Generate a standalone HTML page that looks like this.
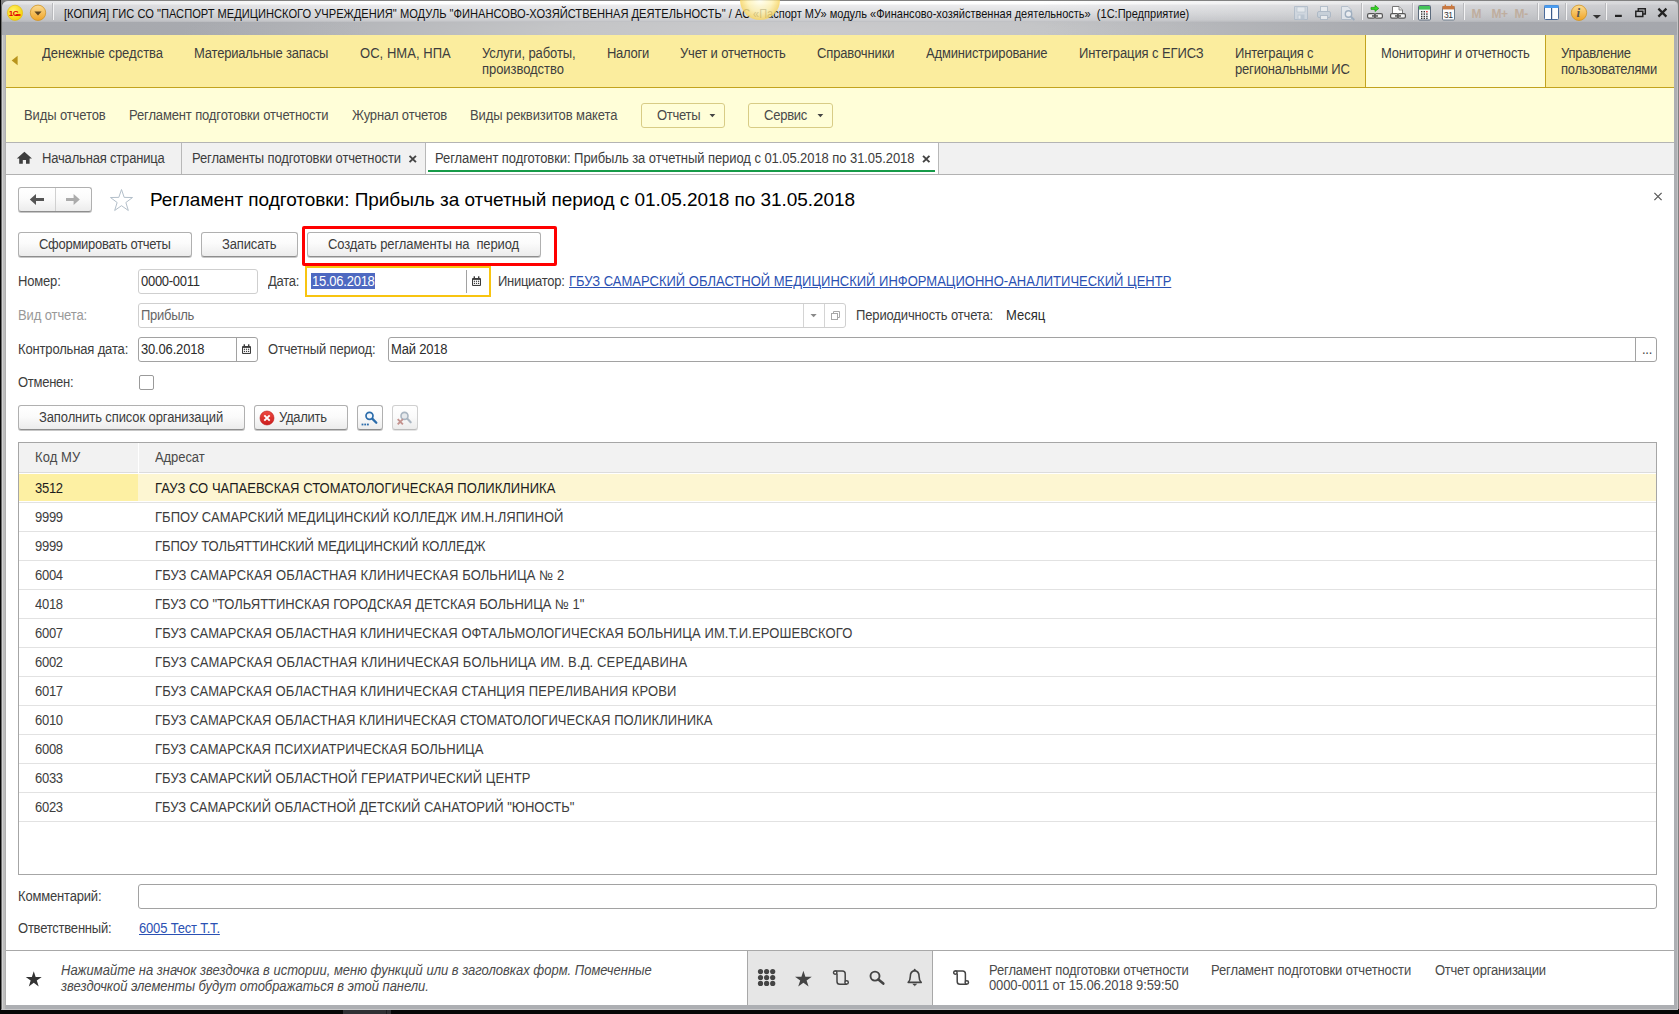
<!DOCTYPE html>
<html lang="ru">
<head>
<meta charset="utf-8">
<title>Регламент подготовки</title>
<style>
*{box-sizing:border-box;margin:0;padding:0}
html,body{width:1679px;height:1014px;overflow:hidden;background:#fff}
body{font-family:"Liberation Sans",sans-serif;font-size:13px;color:#3d3d3d;position:relative}
.a,.t{position:absolute;white-space:pre}
.t{line-height:16px;font-size:13px}

/* window frame */
#bgblack{left:0;top:0;width:1679px;height:1014px;background:linear-gradient(90deg,#060606 0,#060606 1px,rgba(0,0,0,0) 1px),linear-gradient(180deg,#808080 0,#808080 1009px,#060606 1009px)}
#win{left:1px;top:0;width:1677px;height:1010px;background:#adafb3;border-radius:7px 5px 0 0;border:1px solid #828282;border-bottom:1px solid #c8c8ca;border-left:1px solid #6e6e6e;border-right:1px solid #c4c4c6}
#frL{left:2px;top:35px;width:4px;height:974px;background:linear-gradient(90deg,#d2d2d2 0,#d2d2d2 1px,#bebebe 1px,#bcbcbc 3px,#b0b0b0 3px,#b0b0b0 4px)}
#topl{left:8px;top:0;width:1664px;height:1px;background:#828282}
#titlebar{left:2px;top:1px;width:1675px;height:34px;border-radius:6px 4px 0 0;overflow:hidden;background:linear-gradient(90deg,rgba(160,162,168,.3) 0,rgba(160,162,168,0) 22%,rgba(160,162,168,0) 62%,rgba(160,162,168,.45) 100%),linear-gradient(180deg,#ffffff 0,#ffffff 2.5px,#ebebed 4.5px,#dddee0 12px,#cdced1 19px,#bdbec2 21px,rgba(169,171,176,0) 21.5px),radial-gradient(ellipse 620px 40px at 800px 30px,#cbcbcd 0,#c4c5c7 40%,#a9abb0 100%)}
.ttl{top:5.6px;font-size:13px;color:#111;transform-origin:0 0}
.tsep{top:3px;width:2px;height:17px;background:linear-gradient(90deg,#b9babd 0,#b9babd 1px,#f4f4f5 1px)}
/* sections */
#sections{left:6px;top:35px;width:1668px;height:53px;background:#fbed9e;border-bottom:1px solid #c2a31e}
#secActive{left:1365px;top:35px;width:181px;height:52px;background:#fffed8;border-left:1px solid #c2a31e;border-right:1px solid #c2a31e}
.sec{color:#3d3d3d}
#cmds{left:6px;top:88px;width:1668px;height:55px;background:#fffed8;border-bottom:1px solid #b4b4b4}
.cmd{color:#4a4a4a}
.cbtn{top:103px;height:25px;border:1px solid #d8cc86;border-radius:3px;background:#fffed8}
#tabs{left:6px;top:143px;width:1668px;height:32px;background:#f1f1f1;border-bottom:1px solid #b2b2b2}
#tabA{left:425px;top:143px;width:514px;height:31px;background:#fff;border-left:1px solid #b8b8b8;border-right:1px solid #b8b8b8}
#tabU{left:428px;top:170px;width:507px;height:2px;background:#169a48}
.vsep{width:1px;background:#b8b8b8}
.tab{color:#3d3d3d}
/* buttons */
.btn{height:25px;border:1px solid #b0b0b0;border-bottom-color:#8e8e8e;border-radius:3px;background:linear-gradient(180deg,#ffffff 0,#fbfbfb 45%,#ececec 100%);box-shadow:0 1px 0 rgba(0,0,0,.22)}
.btn.dis{border-color:#d0d0d0;border-bottom-color:#bcbcbc;box-shadow:0 1px 0 rgba(0,0,0,.1)}
.inp{height:25px;border:1px solid #a2a2a2;border-radius:3px;background:#fff}
.inp.lt{border-color:#cfcfcf}
.lbl{color:#3d3d3d}
.gray{color:#999}
.isep{width:1px;background:#a2a2a2}
/* table */
#tbl{left:18px;top:442px;width:1639px;height:433px;border:1px solid #a6a6a6;background:#fff}
#thead{left:19px;top:443px;width:1637px;height:30px;background:#f2f2f2;border-bottom:1px solid #dcdcdc}
.hl{left:19px;width:1637px;height:1px;background:#e2e2e2}
.row{color:#3d3d3d}
#bottom{left:6px;top:950px;width:1668px;height:55px;background:#fff;border-top:1px solid #a8a8a8}
#bmid{left:747px;top:951px;width:186px;height:54px;background:#e6e6e6;border-left:1px solid #a8a8a8;border-right:1px solid #a8a8a8}
.it{font-style:italic;color:#4a4a4a}
</style>
</head>
<body>
<div class="a" id="bgblack"></div>
<div class="a" id="win"></div>
<div class="a" id="titlebar"></div>
<div class="a tsep" style="left:52px"></div>
<div class="a tsep" style="left:1361px"></div>
<div class="a tsep" style="left:1412px"></div>
<div class="a tsep" style="left:1463px"></div>
<div class="a tsep" style="left:1537px"></div>
<div class="a tsep" style="left:1565px"></div>
<div class="a tsep" style="left:1605px"></div>
<div class="a" id="sections"></div><div class="a" id="secActive"></div>
<div class="a" id="frL"></div>
<div class="a" id="cmds"></div>
<div class="a cbtn" style="left:641px;top:103px;width:84px;height:25px;"></div>
<div class="a cbtn" style="left:748px;top:103px;width:85px;height:25px;"></div>
<div class="a" id="tabs"></div><div class="a" id="tabA"></div><div class="a" id="tabU"></div>
<div class="a vsep" style="left:181px;top:143px;width:1px;height:31px;"></div>
<div class="a " style="left:6px;top:175px;width:1668px;height:775px;background:#fff"></div>
<div class="a btn" style="left:18px;top:187px;width:74px;height:25px;"></div>
<div class="a " style="left:55px;top:188px;width:1px;height:23px;background:#d0d0d0"></div>
<div class="a btn" style="left:18px;top:232px;width:174px;height:25px;"></div>
<div class="a btn" style="left:201px;top:232px;width:97px;height:25px;"></div>
<div class="a btn" style="left:307px;top:232px;width:234px;height:25px;"></div>
<div class="a " style="left:302px;top:226px;width:255px;height:40px;border:3px solid #ff0000;border-radius:2px"></div>
<div class="a inp lt" style="left:138px;top:269px;width:120px;height:25px;"></div>
<div class="a " style="left:305px;top:266px;width:186px;height:31px;border:2px solid #f8c410;background:#fff"></div>
<div class="a " style="left:311px;top:273px;width:64px;height:16px;background:#4e69c1"></div>
<div class="a isep" style="left:466px;top:270px;width:1px;height:23px;"></div>
<div class="a inp lt" style="left:138px;top:303px;width:708px;height:25px;"></div>
<div class="a " style="left:803px;top:304px;width:1px;height:23px;background:#d4d4d4"></div>
<div class="a " style="left:824px;top:304px;width:1px;height:23px;background:#d4d4d4"></div>
<div class="a inp" style="left:138px;top:337px;width:120px;height:25px;"></div>
<div class="a isep" style="left:236px;top:338px;width:1px;height:23px;"></div>
<div class="a inp" style="left:388px;top:337px;width:1269px;height:25px;"></div>
<div class="a isep" style="left:1635px;top:338px;width:1px;height:23px;"></div>
<div class="a " style="left:139px;top:375px;width:15px;height:15px;border:1px solid #9a9a9a;border-radius:2px;background:#fff"></div>
<div class="a btn" style="left:18px;top:405px;width:227px;height:25px;"></div>
<div class="a btn" style="left:254px;top:405px;width:94px;height:25px;"></div>
<div class="a btn" style="left:357px;top:405px;width:26px;height:25px;"></div>
<div class="a btn dis" style="left:392px;top:405px;width:26px;height:25px;"></div>
<div class="a" id="tbl"></div><div class="a" id="thead"></div>
<div class="a " style="left:138px;top:443px;width:1px;height:30px;background:#fff"></div>
<div class="a " style="left:19px;top:474px;width:119px;height:27px;background:#fdf0a3"></div>
<div class="a " style="left:138px;top:474px;width:1518px;height:27px;background:#fdf6d2"></div>
<div class="a hl" style="left:19px;top:502px;width:1637px;height:1px;"></div>
<div class="a hl" style="left:19px;top:531px;width:1637px;height:1px;"></div>
<div class="a hl" style="left:19px;top:560px;width:1637px;height:1px;"></div>
<div class="a hl" style="left:19px;top:589px;width:1637px;height:1px;"></div>
<div class="a hl" style="left:19px;top:618px;width:1637px;height:1px;"></div>
<div class="a hl" style="left:19px;top:647px;width:1637px;height:1px;"></div>
<div class="a hl" style="left:19px;top:676px;width:1637px;height:1px;"></div>
<div class="a hl" style="left:19px;top:705px;width:1637px;height:1px;"></div>
<div class="a hl" style="left:19px;top:734px;width:1637px;height:1px;"></div>
<div class="a hl" style="left:19px;top:763px;width:1637px;height:1px;"></div>
<div class="a hl" style="left:19px;top:792px;width:1637px;height:1px;"></div>
<div class="a hl" style="left:19px;top:821px;width:1637px;height:1px;"></div>
<div class="a inp" style="left:138px;top:884px;width:1519px;height:25px;"></div>
<div class="a" id="bottom"></div><div class="a" id="bmid"></div>
<div class="a " style="left:343px;top:1010px;width:48px;height:4px;background:#303034"></div>
<div class="a " style="left:386px;top:1010px;width:1px;height:4px;background:#1c1c1e"></div>
<div class="t ttl" id="titleA" style="left:63.5px;transform:scaleX(0.8557)">[КОПИЯ] ГИС СО "ПАСПОРТ МЕДИЦИНСКОГО УЧРЕЖДЕНИЯ" МОДУЛЬ "ФИНАНСОВО-ХОЗЯЙСТВЕННАЯ ДЕЯТЕЛЬНОСТЬ" / АС</div><div class="t ttl" id="titleB" style="left:753.0px;transform:scaleX(0.8479)">«Паспорт МУ» модуль «Финансово-хозяйственная деятельность»  (1С:Предприятие)</div>
<div class="t sec" style="left:42.00px;top:45px;font-size:14px;transform:scaleX(0.9286);transform-origin:0 0;letter-spacing:0.002px;">Денежные средства</div>
<div class="t sec" style="left:194.25px;top:45px;font-size:14px;transform:scaleX(0.9286);transform-origin:0 0;letter-spacing:-0.205px;">Материальные запасы</div>
<div class="t sec" style="left:360.00px;top:45px;font-size:14px;transform:scaleX(0.9286);transform-origin:0 0;letter-spacing:0.054px;">ОС, НМА, НПА</div>
<div class="t sec" style="left:482.00px;top:45px;font-size:14px;transform:scaleX(0.9286);transform-origin:0 0;letter-spacing:-0.098px;">Услуги, работы,</div>
<div class="t sec" style="left:482.00px;top:61px;font-size:14px;transform:scaleX(0.9286);transform-origin:0 0;letter-spacing:-0.056px;">производство</div>
<div class="t sec" style="left:607.00px;top:45px;font-size:14px;transform:scaleX(0.9286);transform-origin:0 0;letter-spacing:-0.302px;">Налоги</div>
<div class="t sec" style="left:680.00px;top:45px;font-size:14px;transform:scaleX(0.9286);transform-origin:0 0;letter-spacing:-0.174px;">Учет и отчетность</div>
<div class="t sec" style="left:817.00px;top:45px;font-size:14px;transform:scaleX(0.9286);transform-origin:0 0;letter-spacing:-0.139px;">Справочники</div>
<div class="t sec" style="left:926.25px;top:45px;font-size:14px;transform:scaleX(0.9286);transform-origin:0 0;letter-spacing:-0.166px;">Администрирование</div>
<div class="t sec" style="left:1079.25px;top:45px;font-size:14px;transform:scaleX(0.9286);transform-origin:0 0;letter-spacing:-0.107px;">Интеграция с ЕГИСЗ</div>
<div class="t sec" style="left:1235.00px;top:45px;font-size:14px;transform:scaleX(0.9286);transform-origin:0 0;letter-spacing:-0.204px;">Интеграция с</div>
<div class="t sec" style="left:1235.00px;top:61px;font-size:14px;transform:scaleX(0.9286);transform-origin:0 0;letter-spacing:-0.198px;">региональными ИС</div>
<div class="t sec" style="left:1381.00px;top:45px;font-size:14px;transform:scaleX(0.9286);transform-origin:0 0;letter-spacing:-0.190px;">Мониторинг и отчетность</div>
<div class="t sec" style="left:1561.00px;top:45px;font-size:14px;transform:scaleX(0.9286);transform-origin:0 0;letter-spacing:-0.261px;">Управление</div>
<div class="t sec" style="left:1561.00px;top:61px;font-size:14px;transform:scaleX(0.9286);transform-origin:0 0;letter-spacing:-0.187px;">пользователями</div>
<div class="t cmd" style="left:24.25px;top:107px;font-size:14px;transform:scaleX(0.9286);transform-origin:0 0;letter-spacing:-0.116px;">Виды отчетов</div>
<div class="t cmd" style="left:129.00px;top:107px;font-size:14px;transform:scaleX(0.9286);transform-origin:0 0;letter-spacing:-0.146px;">Регламент подготовки отчетности</div>
<div class="t cmd" style="left:351.50px;top:107px;font-size:14px;transform:scaleX(0.9286);transform-origin:0 0;letter-spacing:-0.183px;">Журнал отчетов</div>
<div class="t cmd" style="left:470.25px;top:107px;font-size:14px;transform:scaleX(0.9286);transform-origin:0 0;letter-spacing:-0.101px;">Виды реквизитов макета</div>
<div class="t cmd" style="left:657.00px;top:107px;font-size:14px;transform:scaleX(0.9286);transform-origin:0 0;letter-spacing:-0.302px;">Отчеты</div>
<div class="t cmd" style="left:764.00px;top:107px;font-size:14px;transform:scaleX(0.9286);transform-origin:0 0;letter-spacing:-0.257px;">Сервис</div>
<div class="t tab" style="left:42.00px;top:150px;font-size:14px;transform:scaleX(0.9286);transform-origin:0 0;letter-spacing:-0.191px;">Начальная страница</div>
<div class="t tab" style="left:191.75px;top:150px;font-size:14px;transform:scaleX(0.9286);transform-origin:0 0;letter-spacing:-0.136px;">Регламенты подготовки отчетности</div>
<div class="t tab" style="left:435.00px;top:150px;font-size:14px;transform:scaleX(0.9286);transform-origin:0 0;letter-spacing:-0.073px;">Регламент подготовки: Прибыль за отчетный период с 01.05.2018 по 31.05.2018</div>
<div class="t ftitle" style="left:150.00px;top:188px;font-size:19px;line-height:24px;letter-spacing:-0.039px;color:#000">Регламент подготовки: Прибыль за отчетный период с 01.05.2018 по 31.05.2018</div>
<div class="t btxt" style="left:39.25px;top:236px;font-size:14px;transform:scaleX(0.9286);transform-origin:0 0;letter-spacing:-0.308px;color:#3d3d3d">Сформировать отчеты</div>
<div class="t btxt" style="left:222.00px;top:236px;font-size:14px;transform:scaleX(0.9286);transform-origin:0 0;letter-spacing:-0.162px;color:#3d3d3d">Записать</div>
<div class="t btxt" style="left:328.25px;top:236px;font-size:14px;transform:scaleX(0.9286);transform-origin:0 0;letter-spacing:-0.106px;color:#3d3d3d">Создать регламенты на  период</div>
<div class="t lbl" style="left:18.00px;top:273px;font-size:14px;transform:scaleX(0.9286);transform-origin:0 0;letter-spacing:-0.185px;">Номер:</div>
<div class="t val" style="left:141.25px;top:273px;font-size:14px;transform:scaleX(0.9286);transform-origin:0 0;letter-spacing:-0.302px;color:#2c2c2c">0000-0011</div>
<div class="t lbl" style="left:268.00px;top:273px;font-size:14px;transform:scaleX(0.9286);transform-origin:0 0;letter-spacing:-0.280px;">Дата:</div>
<div class="t sel" style="left:311.75px;top:273px;font-size:14px;transform:scaleX(0.9286);transform-origin:0 0;letter-spacing:-0.266px;color:#fff">15.06.2018</div>
<div class="t lbl" style="left:498.25px;top:273px;font-size:14px;transform:scaleX(0.9286);transform-origin:0 0;letter-spacing:-0.302px;">Инициатор:</div>
<div class="t lnk" style="left:569.25px;top:273px;font-size:14px;transform:scaleX(0.9286);transform-origin:0 0;letter-spacing:0.004px;color:#2b51b3;text-decoration:underline">ГБУЗ САМАРСКИЙ ОБЛАСТНОЙ МЕДИЦИНСКИЙ ИНФОРМАЦИОННО-АНАЛИТИЧЕСКИЙ ЦЕНТР</div>
<div class="t gray" style="left:18.00px;top:307px;font-size:14px;transform:scaleX(0.9286);transform-origin:0 0;letter-spacing:-0.113px;">Вид отчета:</div>
<div class="t val" style="left:141.25px;top:307px;font-size:14px;transform:scaleX(0.9286);transform-origin:0 0;letter-spacing:-0.302px;color:#666">Прибыль</div>
<div class="t lbl" style="left:856.25px;top:307px;font-size:14px;transform:scaleX(0.9286);transform-origin:0 0;letter-spacing:-0.150px;">Периодичность отчета:</div>
<div class="t val" style="left:1005.75px;top:307px;font-size:14px;transform:scaleX(0.9286);transform-origin:0 0;letter-spacing:0.031px;color:#2c2c2c">Месяц</div>
<div class="t lbl" style="left:18.00px;top:341px;font-size:14px;transform:scaleX(0.9286);transform-origin:0 0;letter-spacing:-0.166px;">Контрольная дата:</div>
<div class="t val" style="left:141.25px;top:341px;font-size:14px;transform:scaleX(0.9286);transform-origin:0 0;letter-spacing:-0.186px;color:#2c2c2c">30.06.2018</div>
<div class="t lbl" style="left:268.25px;top:341px;font-size:14px;transform:scaleX(0.9286);transform-origin:0 0;letter-spacing:-0.171px;">Отчетный период:</div>
<div class="t val" style="left:391.25px;top:341px;font-size:14px;transform:scaleX(0.9286);transform-origin:0 0;letter-spacing:-0.223px;color:#2c2c2c">Май 2018</div>
<div class="t val" style="left:1641.50px;top:341px;font-size:14px;transform:scaleX(0.9286);transform-origin:0 0;letter-spacing:-0.302px;color:#444">...</div>
<div class="t lbl" style="left:18.00px;top:374px;font-size:14px;transform:scaleX(0.9286);transform-origin:0 0;letter-spacing:-0.282px;">Отменен:</div>
<div class="t btxt" style="left:39.25px;top:409px;font-size:14px;transform:scaleX(0.9286);transform-origin:0 0;letter-spacing:-0.118px;">Заполнить список организаций</div>
<div class="t btxt" style="left:279.25px;top:409px;font-size:14px;transform:scaleX(0.9286);transform-origin:0 0;letter-spacing:-0.302px;">Удалить</div>
<div class="t th" style="left:35.00px;top:449px;font-size:14px;transform:scaleX(0.9286);transform-origin:0 0;letter-spacing:0.108px;color:#4a4a4a">Код МУ</div>
<div class="t th" style="left:155.00px;top:449px;font-size:14px;transform:scaleX(0.9286);transform-origin:0 0;letter-spacing:-0.082px;color:#4a4a4a">Адресат</div>
<div class="t row" style="left:35.00px;top:480px;font-size:14px;transform:scaleX(0.9286);transform-origin:0 0;letter-spacing:-0.302px;color:#1c1c1c">3512</div>
<div class="t row" style="left:154.70px;top:480px;font-size:14px;transform:scaleX(0.9286);transform-origin:0 0;letter-spacing:0.051px;color:#1c1c1c">ГАУЗ СО ЧАПАЕВСКАЯ СТОМАТОЛОГИЧЕСКАЯ ПОЛИКЛИНИКА</div>
<div class="t row" style="left:35.00px;top:509px;font-size:14px;transform:scaleX(0.9286);transform-origin:0 0;letter-spacing:-0.302px;color:#3d3d3d">9999</div>
<div class="t row" style="left:154.70px;top:509px;font-size:14px;transform:scaleX(0.9286);transform-origin:0 0;letter-spacing:0.038px;color:#3d3d3d">ГБПОУ САМАРСКИЙ МЕДИЦИНСКИЙ КОЛЛЕДЖ ИМ.Н.ЛЯПИНОЙ</div>
<div class="t row" style="left:35.00px;top:538px;font-size:14px;transform:scaleX(0.9286);transform-origin:0 0;letter-spacing:-0.302px;color:#3d3d3d">9999</div>
<div class="t row" style="left:154.70px;top:538px;font-size:14px;transform:scaleX(0.9286);transform-origin:0 0;letter-spacing:-0.069px;color:#3d3d3d">ГБПОУ ТОЛЬЯТТИНСКИЙ МЕДИЦИНСКИЙ КОЛЛЕДЖ</div>
<div class="t row" style="left:35.00px;top:567px;font-size:14px;transform:scaleX(0.9286);transform-origin:0 0;letter-spacing:-0.302px;color:#3d3d3d">6004</div>
<div class="t row" style="left:154.70px;top:567px;font-size:14px;transform:scaleX(0.9286);transform-origin:0 0;letter-spacing:0.126px;color:#3d3d3d">ГБУЗ САМАРСКАЯ ОБЛАСТНАЯ КЛИНИЧЕСКАЯ БОЛЬНИЦА № 2</div>
<div class="t row" style="left:35.00px;top:596px;font-size:14px;transform:scaleX(0.9286);transform-origin:0 0;letter-spacing:-0.302px;color:#3d3d3d">4018</div>
<div class="t row" style="left:154.70px;top:596px;font-size:14px;transform:scaleX(0.9286);transform-origin:0 0;letter-spacing:-0.015px;color:#3d3d3d">ГБУЗ СО "ТОЛЬЯТТИНСКАЯ ГОРОДСКАЯ ДЕТСКАЯ БОЛЬНИЦА № 1"</div>
<div class="t row" style="left:35.00px;top:625px;font-size:14px;transform:scaleX(0.9286);transform-origin:0 0;letter-spacing:-0.302px;color:#3d3d3d">6007</div>
<div class="t row" style="left:154.70px;top:625px;font-size:14px;transform:scaleX(0.9286);transform-origin:0 0;letter-spacing:0.104px;color:#3d3d3d">ГБУЗ САМАРСКАЯ ОБЛАСТНАЯ КЛИНИЧЕСКАЯ ОФТАЛЬМОЛОГИЧЕСКАЯ БОЛЬНИЦА ИМ.Т.И.ЕРОШЕВСКОГО</div>
<div class="t row" style="left:35.00px;top:654px;font-size:14px;transform:scaleX(0.9286);transform-origin:0 0;letter-spacing:-0.302px;color:#3d3d3d">6002</div>
<div class="t row" style="left:154.70px;top:654px;font-size:14px;transform:scaleX(0.9286);transform-origin:0 0;letter-spacing:0.147px;color:#3d3d3d">ГБУЗ САМАРСКАЯ ОБЛАСТНАЯ КЛИНИЧЕСКАЯ БОЛЬНИЦА ИМ. В.Д. СЕРЕДАВИНА</div>
<div class="t row" style="left:35.00px;top:683px;font-size:14px;transform:scaleX(0.9286);transform-origin:0 0;letter-spacing:-0.302px;color:#3d3d3d">6017</div>
<div class="t row" style="left:154.70px;top:683px;font-size:14px;transform:scaleX(0.9286);transform-origin:0 0;letter-spacing:0.106px;color:#3d3d3d">ГБУЗ САМАРСКАЯ ОБЛАСТНАЯ КЛИНИЧЕСКАЯ СТАНЦИЯ ПЕРЕЛИВАНИЯ КРОВИ</div>
<div class="t row" style="left:35.00px;top:712px;font-size:14px;transform:scaleX(0.9286);transform-origin:0 0;letter-spacing:-0.302px;color:#3d3d3d">6010</div>
<div class="t row" style="left:154.70px;top:712px;font-size:14px;transform:scaleX(0.9286);transform-origin:0 0;letter-spacing:0.061px;color:#3d3d3d">ГБУЗ САМАРСКАЯ ОБЛАСТНАЯ КЛИНИЧЕСКАЯ СТОМАТОЛОГИЧЕСКАЯ ПОЛИКЛИНИКА</div>
<div class="t row" style="left:35.00px;top:741px;font-size:14px;transform:scaleX(0.9286);transform-origin:0 0;letter-spacing:-0.302px;color:#3d3d3d">6008</div>
<div class="t row" style="left:154.70px;top:741px;font-size:14px;transform:scaleX(0.9286);transform-origin:0 0;letter-spacing:0.032px;color:#3d3d3d">ГБУЗ САМАРСКАЯ ПСИХИАТРИЧЕСКАЯ БОЛЬНИЦА</div>
<div class="t row" style="left:35.00px;top:770px;font-size:14px;transform:scaleX(0.9286);transform-origin:0 0;letter-spacing:-0.302px;color:#3d3d3d">6033</div>
<div class="t row" style="left:154.70px;top:770px;font-size:14px;transform:scaleX(0.9286);transform-origin:0 0;letter-spacing:0.059px;color:#3d3d3d">ГБУЗ САМАРСКИЙ ОБЛАСТНОЙ ГЕРИАТРИЧЕСКИЙ ЦЕНТР</div>
<div class="t row" style="left:35.00px;top:799px;font-size:14px;transform:scaleX(0.9286);transform-origin:0 0;letter-spacing:-0.302px;color:#3d3d3d">6023</div>
<div class="t row" style="left:154.70px;top:799px;font-size:14px;transform:scaleX(0.9286);transform-origin:0 0;letter-spacing:-0.011px;color:#3d3d3d">ГБУЗ САМАРСКИЙ ОБЛАСТНОЙ ДЕТСКИЙ САНАТОРИЙ "ЮНОСТЬ"</div>
<div class="t lbl" style="left:18.00px;top:888px;font-size:14px;transform:scaleX(0.9286);transform-origin:0 0;letter-spacing:-0.193px;">Комментарий:</div>
<div class="t lbl" style="left:18.00px;top:920px;font-size:14px;transform:scaleX(0.9286);transform-origin:0 0;letter-spacing:-0.239px;">Ответственный:</div>
<div class="t lnk" style="left:139.00px;top:920px;font-size:14px;transform:scaleX(0.9286);transform-origin:0 0;letter-spacing:-0.186px;color:#2b51b3;text-decoration:underline">6005 Тест Т.Т.</div>
<div class="t it" style="left:61.25px;top:962px;font-size:14px;transform:scaleX(0.9286);transform-origin:0 0;letter-spacing:-0.005px;">Нажимайте на значок звездочка в истории, меню функций или в заголовках форм. Помеченные</div>
<div class="t it" style="left:61.25px;top:978px;font-size:14px;transform:scaleX(0.9286);transform-origin:0 0;letter-spacing:-0.034px;">звездочкой элементы будут отображаться в этой панели.</div>
<div class="t hist" style="left:988.50px;top:962px;font-size:14px;transform:scaleX(0.9286);transform-origin:0 0;letter-spacing:-0.137px;color:#4a4a4a">Регламент подготовки отчетности</div>
<div class="t hist" style="left:988.50px;top:977px;font-size:14px;transform:scaleX(0.9286);transform-origin:0 0;letter-spacing:-0.131px;color:#4a4a4a">0000-0011 от 15.06.2018 9:59:50</div>
<div class="t hist" style="left:1211.00px;top:962px;font-size:14px;transform:scaleX(0.9286);transform-origin:0 0;letter-spacing:-0.120px;color:#4a4a4a">Регламент подготовки отчетности</div>
<div class="t hist" style="left:1434.50px;top:962px;font-size:14px;transform:scaleX(0.9286);transform-origin:0 0;letter-spacing:-0.260px;color:#4a4a4a">Отчет организации</div>

<svg class="a" style="left:0;top:0" width="1679" height="1014" viewBox="0 0 1679 1014">
<defs>
<radialGradient id="g1c" cx="40%" cy="35%" r="70%"><stop offset="0" stop-color="#fff36a"/><stop offset="1" stop-color="#f6cf00"/></radialGradient>
<linearGradient id="gorb" x1="0" y1="0" x2="0" y2="1"><stop offset="0" stop-color="#fbdc92"/><stop offset="1" stop-color="#f0a326"/></linearGradient>
<linearGradient id="gred" x1="0" y1="0" x2="0" y2="1"><stop offset="0" stop-color="#ee4a42"/><stop offset="1" stop-color="#cc1c1c"/></linearGradient>
<radialGradient id="gglow" cx="50%" cy="50%" r="50%"><stop offset="0" stop-color="#fffff0" stop-opacity=".85"/><stop offset=".6" stop-color="#fff2b0" stop-opacity=".8"/><stop offset="1" stop-color="#f7d564" stop-opacity=".85"/></radialGradient>
</defs>
<circle cx="760" cy="0" r="20" fill="url(#gglow)"/>
<!-- title bar left -->
<circle cx="15" cy="12.8" r="7.6" fill="url(#g1c)" stroke="#e3b800" stroke-width=".6"/>
<text x="8.700" y="15.800" font-family="Liberation Sans, sans-serif" font-weight="bold" font-size="8" fill="#e40000" letter-spacing="-.5">1С</text><rect x="15.500" y="14.200" width="5" height="1.600" fill="#e40000"/>
<circle cx="38" cy="12.8" r="7.7" fill="url(#gorb)" stroke="#cf9427" stroke-width=".8"/>
<path d="M34.4 11.4 H41.6 L38 15.4 Z" fill="#5b4320"/>
<!-- toolbar icons: save (disabled) -->
<g opacity=".75">
<path d="M1294.5 6.5 H1307.5 V19.5 H1294.5 Z" fill="#cfd8e2" stroke="#a9b7c6"/>
<rect x="1297" y="7" width="8" height="5" fill="#e9eef3" stroke="#a9b7c6" stroke-width=".6"/>
<rect x="1297.5" y="14.5" width="7" height="5" fill="#b5c3d1"/><rect x="1298.5" y="15.5" width="2" height="3.2" fill="#e9eef3"/>
<!-- print -->
<rect x="1320.5" y="6.5" width="7" height="6" fill="#eef2f6" stroke="#a9b7c6"/>
<rect x="1317.500" y="11.5" width="13" height="6" rx="1.5" fill="#c5d0db" stroke="#a3b2c2"/>
<rect x="1320.5" y="15.5" width="7" height="4" fill="#f2f5f8" stroke="#a9b7c6"/>
<!-- preview -->
<path d="M1341.5 6.500 H1348 L1351.5 10 V19.500 H1341.5 Z" fill="#e6ecf2" stroke="#a9b7c6"/>
<circle cx="1348.5" cy="14" r="3.2" fill="#f4f7fa" stroke="#8fa4ba" stroke-width="1.4"/>
<path d="M1350.8 16.400 L1354.300 20" stroke="#8fa4ba" stroke-width="1.8"/>
</g>
<!-- link with green arrow -->
<g>
<rect x="1367.6" y="13.6" width="7.4" height="4.6" rx="1.4" fill="#f4f4f4" stroke="#555" stroke-width="1.2"/>
<rect x="1375" y="13.6" width="7.4" height="4.6" rx="1.4" fill="#f4f4f4" stroke="#555" stroke-width="1.2"/>
<rect x="1372" y="15.2" width="6" height="1.5" fill="#555"/>
<path d="M1371 7.400 H1375 V5.300 L1378.800 8.400 L1375 11.500 V9.400 H1371 Z" fill="#35d822" stroke="#1c9412" stroke-width=".7"/>
</g>
<!-- link with doc -->
<g>
<path d="M1392.5 13 V6.500 H1399 L1402.500 10 V13" fill="#fff" stroke="#777" stroke-width="1"/>
<path d="M1399 6.500 V10 H1402.500" fill="#e4e4e4" stroke="#777" stroke-width=".8"/>
<rect x="1390.6" y="13.6" width="7.4" height="4.600" rx="1.4" fill="#f4f4f4" stroke="#555" stroke-width="1.2"/>
<rect x="1398" y="13.6" width="7.4" height="4.600" rx="1.4" fill="#f4f4f4" stroke="#555" stroke-width="1.2"/>
<rect x="1395" y="15.2" width="6" height="1.500" fill="#555"/>
</g>
<!-- calculator -->
<rect x="1418.5" y="5.500" width="12" height="14.5" rx="1" fill="#f6f8fa" stroke="#5c6b7c"/>
<rect x="1419" y="6" width="11" height="3.600" fill="#45c45a"/>
<g fill="#333"><rect x="1421" y="11" width="1.4" height="1.400"/><rect x="1423.6" y="11" width="1.4" height="1.400"/><rect x="1426.2" y="11" width="1.4" height="1.400" fill="#e02020"/>
<rect x="1421" y="13.4" width="1.4" height="1.400"/><rect x="1423.6" y="13.4" width="1.400" height="1.4"/><rect x="1426.2" y="13.4" width="1.400" height="1.4"/>
<rect x="1421" y="15.800" width="1.4" height="1.4"/><rect x="1423.6" y="15.800" width="1.4" height="1.4"/><rect x="1426.2" y="15.800" width="1.4" height="1.4"/>
<rect x="1421" y="17.8" width="1.4" height="1.200"/><rect x="1423.6" y="17.8" width="1.4" height="1.200"/><rect x="1426.2" y="17.8" width="1.4" height="1.200"/></g>
<!-- calendar -->
<rect x="1442.5" y="6.500" width="12" height="13.5" rx="1" fill="#fbfcfd" stroke="#6c7c8c"/>
<rect x="1442.5" y="6" width="12" height="3.400" fill="#c97840"/>
<rect x="1444.6" y="4.6" width="1.400" height="3" fill="#c97840"/><rect x="1451" y="4.6" width="1.400" height="3" fill="#c97840"/>
<text x="1444" y="17.8" font-family="Liberation Sans, sans-serif" font-size="8.5" fill="#333" letter-spacing="-.4">31</text>
<!-- M M+ M- -->
<g font-family="Liberation Sans, sans-serif" font-weight="bold" font-size="12" fill="#bfae9f">
<text x="1471.5" y="17.5">M</text><text x="1491.5" y="17.5" letter-spacing="-.6">M+</text><text x="1514.5" y="17.5" letter-spacing="-.3">M-</text></g>
<!-- panels icon -->
<rect x="1544.500" y="5.500" width="14" height="14" rx="1" fill="#fdfdfe" stroke="#4a6a9a"/>
<rect x="1544.5" y="5.200" width="14" height="2.800" fill="#4a9cf0"/>
<rect x="1551" y="8" width="1.2" height="11.500" fill="#3a5a8a"/>
<!-- info -->
<circle cx="1579" cy="12.8" r="7.700" fill="url(#gorb)" stroke="#cf9427" stroke-width=".8"/>
<text x="1576.600" y="17.200" font-family="Liberation Serif, serif" font-style="italic" font-weight="bold" font-size="13" fill="#555">i</text>
<path d="M1592.8 15 H1601 L1596.900 18.800 Z" fill="#333"/>
<!-- window buttons -->
<rect x="1615" y="14.800" width="6.800" height="2.200" fill="#222"/>
<path d="M1638.300 11 V8.800 H1645.300 V14 H1643" fill="none" stroke="#222" stroke-width="1.500"/>
<rect x="1635.800" y="11.300" width="7" height="5.200" fill="none" stroke="#222" stroke-width="1.500"/>
<path d="M1658.4 8.6 L1666.4 16.6 M1666.4 8.6 L1658.4 16.6" stroke="#222" stroke-width="2.2" fill="none"/>
<!-- sections left arrow -->
<path d="M11.700 60.500 L17.600 55.700 V65.200 Z" fill="#b8941c"/>
<!-- cmd button arrows -->
<path d="M709.500 114 H715.300 L712.400 117.200 Z" fill="#444"/><path d="M817.500 114 H823.300 L820.400 117.200 Z" fill="#444"/>
<!-- home -->
<path d="M16.800 158.600 L24.400 151.800 L32 158.600 H29.600 V163.800 H26 V160 H22.800 V163.800 H19.200 V158.600 Z" fill="#3e3e3e"/>
<path d="M409.55 155.8 L415.95 162.2 M415.95 155.8 L409.55 162.2" stroke="#444" stroke-width="1.9" fill="none"/>
<path d="M923.05 155.8 L929.45 162.2 M929.45 155.8 L923.05 162.2" stroke="#444" stroke-width="1.9" fill="none"/>
<path d="M1654.4 192.9 L1661.6 200.1 M1661.6 192.9 L1654.4 200.1" stroke="#555" stroke-width="1.2" fill="none"/>
<!-- nav arrows -->
<path d="M29.800 199.500 L36 194 V198 H44 V201 H36 V205 Z" fill="#555"/>
<path d="M79.800 199.500 L73.600 194 V198 H66 V201 H73.600 V205 Z" fill="#ababab"/>
<polygon points="121.50,189.50 124.20,197.38 132.53,197.52 125.87,202.52 128.32,210.48 121.50,205.70 114.68,210.48 117.13,202.52 110.47,197.52 118.80,197.38" fill="#fff" stroke="#b3bfca" stroke-width="1"/>
<g transform="translate(472,276.3)"><rect x="0" y="1.6" width="9" height="8" rx="1" fill="#3c3c3c"/>
<rect x="1.6" y="0" width="1.4" height="2.6" fill="#3c3c3c"/><rect x="6" y="0" width="1.4" height="2.6" fill="#3c3c3c"/>
<rect x="1" y="3.6" width="7" height="5" fill="#fff"/>
<g fill="#3c3c3c"><rect x="1.8" y="4.4" width="1.2" height="1.2"/><rect x="3.9" y="4.4" width="1.2" height="1.2"/><rect x="6" y="4.4" width="1.2" height="1.2"/>
<rect x="1.8" y="6.5" width="1.2" height="1.2"/><rect x="3.9" y="6.5" width="1.2" height="1.2"/><rect x="6" y="6.5" width="1.2" height="1.2"/></g></g>
<g transform="translate(242,344.3)"><rect x="0" y="1.6" width="9" height="8" rx="1" fill="#3c3c3c"/>
<rect x="1.6" y="0" width="1.4" height="2.6" fill="#3c3c3c"/><rect x="6" y="0" width="1.4" height="2.6" fill="#3c3c3c"/>
<rect x="1" y="3.6" width="7" height="5" fill="#fff"/>
<g fill="#3c3c3c"><rect x="1.8" y="4.4" width="1.2" height="1.2"/><rect x="3.9" y="4.4" width="1.2" height="1.2"/><rect x="6" y="4.4" width="1.2" height="1.2"/>
<rect x="1.8" y="6.5" width="1.2" height="1.2"/><rect x="3.9" y="6.5" width="1.2" height="1.2"/><rect x="6" y="6.5" width="1.2" height="1.2"/></g></g>
<path d="M810.500 314 H816.700 L813.600 317.300 Z" fill="#8a8a8a"/>
<path d="M833.500 313.500 V311.500 H839.500 V317.500 H837.500" fill="none" stroke="#a8a8a8" stroke-width="1"/><rect x="831.500" y="313.500" width="6" height="6" fill="#fff" stroke="#a8a8a8" stroke-width="1"/>
<!-- delete -->
<circle cx="267" cy="418" r="7" fill="url(#gred)" stroke="#b81818" stroke-width=".6"/>
<path d="M264.3 415.3 L269.7 420.7 M269.7 415.3 L264.3 420.7" stroke="#fff" stroke-width="1.9" fill="none"/>
<!-- search -->
<circle cx="369.500" cy="415.800" r="3.500" fill="#f2f7fc" stroke="#2b6cab" stroke-width="1.700"/>
<path d="M372.500 418.900 L376.300 422.700" stroke="#2b6cab" stroke-width="2.300" stroke-linecap="round"/>
<g fill="#2b6cab"><rect x="361.600" y="423.600" width="1.800" height="1.800"/><rect x="364.300" y="423.600" width="1.800" height="1.800"/><rect x="367" y="423.600" width="1.800" height="1.800"/></g>
<!-- cancel search (disabled) -->
<circle cx="404.500" cy="415.900" r="3.500" fill="#e6e9ec" stroke="#a9b5c1" stroke-width="1.600"/>
<path d="M407.400 418.800 L410.700 422.300" stroke="#a9b5c1" stroke-width="2.100" stroke-linecap="round"/>
<path d="M397.7 419.09999999999997 L402.90000000000003 424.3 M402.90000000000003 419.09999999999997 L397.7 424.3" stroke="#c4928e" stroke-width="1.9" fill="none"/>
<!-- bottom icons -->
<polygon points="33.75,971.20 35.64,977.00 41.74,977.00 36.80,980.59 38.69,986.40 33.75,982.81 28.81,986.40 30.70,980.59 25.76,977.00 31.86,977.00" fill="#333"/>
<g fill="#444"><circle cx="760.5" cy="971.6" r="2.600"/><circle cx="760.5" cy="977.5" r="2.600"/><circle cx="760.5" cy="983.4" r="2.600"/><circle cx="766.6" cy="971.6" r="2.600"/><circle cx="766.6" cy="977.5" r="2.600"/><circle cx="766.6" cy="983.4" r="2.600"/><circle cx="772.7" cy="971.6" r="2.600"/><circle cx="772.7" cy="977.5" r="2.600"/><circle cx="772.7" cy="983.4" r="2.600"/></g>
<polygon points="803.40,970.70 805.38,976.78 811.77,976.78 806.60,980.54 808.57,986.62 803.40,982.86 798.23,986.62 800.20,980.54 795.03,976.78 801.42,976.78" fill="#444"/>
<g transform="translate(832.8,969.8)" fill="none" stroke="#444" stroke-width="1.5" stroke-linejoin="round" stroke-linecap="round">
<path d="M2.2 1.2 H9.6 Q12.4 1.2 12.4 4 V11.4"/>
<path d="M4.2 4.2 V11.6 Q4.2 14.4 7 14.4 H13.6"/>
<circle cx="2.4" cy="2.8" r="1.7" fill="#fff"/><circle cx="13.8" cy="12.6" r="1.7" fill="#fff"/>
</g>
<circle cx="875" cy="976.100" r="4.500" fill="none" stroke="#444" stroke-width="1.900"/>
<path d="M878.400 979.400 L883.300 983.600" stroke="#444" stroke-width="2.600" stroke-linecap="round"/>
<path d="M908.200 982.400 Q910.300 980.600 910.300 976.400 Q910.300 971.300 914.700 970.600 Q919.100 971.300 919.100 976.400 Q919.100 980.600 921.200 982.400 Z" fill="none" stroke="#444" stroke-width="1.600" stroke-linejoin="round"/>
<circle cx="914.700" cy="969.800" r="1" fill="#444"/><path d="M912.800 984 H916.600 L914.700 985.800 Z" fill="#444" stroke="#444" stroke-width=".6"/>
<g transform="translate(953,969.8)" fill="none" stroke="#444" stroke-width="1.5" stroke-linejoin="round" stroke-linecap="round">
<path d="M2.2 1.2 H9.6 Q12.4 1.2 12.4 4 V11.4"/>
<path d="M4.2 4.2 V11.6 Q4.2 14.4 7 14.4 H13.6"/>
<circle cx="2.4" cy="2.8" r="1.7" fill="#fff"/><circle cx="13.8" cy="12.6" r="1.7" fill="#fff"/>
</g>
</svg>

</body>
</html>
